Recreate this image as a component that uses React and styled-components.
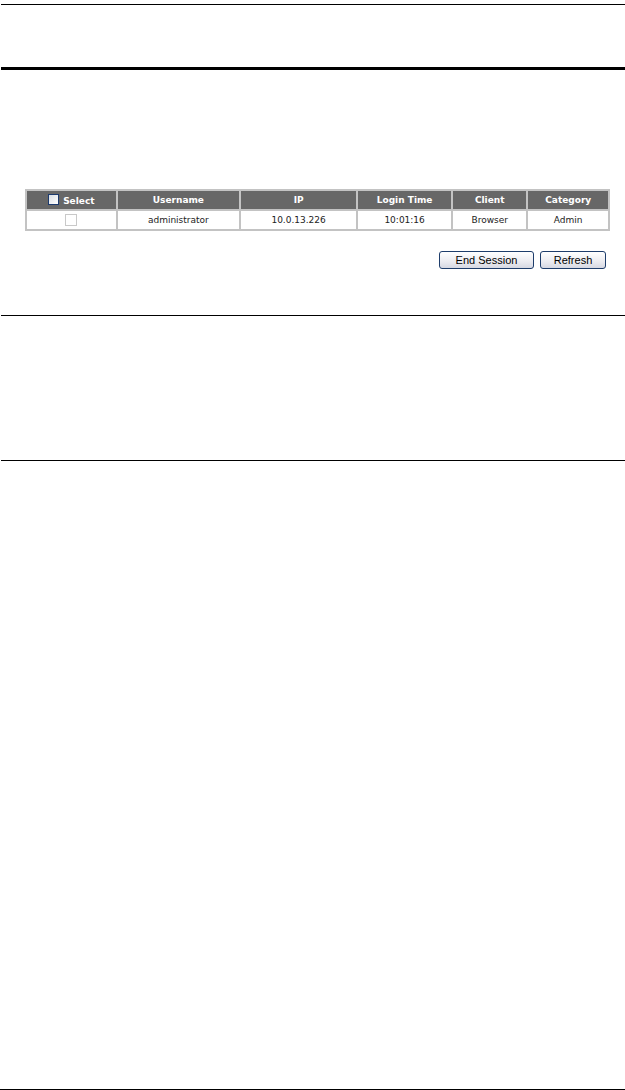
import React from "react";
import styled, { createGlobalStyle } from "styled-components";

const Global = createGlobalStyle`
  html, body { margin: 0; padding: 0; background: #fff; }
  body { width: 625px; height: 1090px; overflow: hidden; font-family: "DejaVu Sans", Verdana, sans-serif; }
`;

const Page = styled.div`
  width: 625px;
  height: 1090px;
  display: flex;
  flex-direction: column;
`;

const Rule = styled.div`
  margin-left: ${p => p.$left ?? 1}px;
  height: ${p => p.$h}px;
  background: #000;
  flex: none;
`;

const Spacer = styled.div`
  height: ${p => p.$h}px;
  flex: none;
`;

const Table = styled.table`
  margin-left: 25px;
  width: 585px;
  border-collapse: collapse;
  font-family: "DejaVu Sans", Verdana, sans-serif;
  font-size: 9px;
  table-layout: fixed;
`;

const Th = styled.th`
  background: #676767;
  color: #fff;
  font-weight: bold;
  height: 18px;
  padding: 0;
  border: 2px solid #c3c3c3;
  text-align: center;
  vertical-align: middle;
  white-space: nowrap;
`;

const Col = styled.col`
  width: ${p => p.$w}px;
`;

const Td = styled.td`
  height: 18px;
  padding: 0;
  border: 2px solid #c3c3c3;
  text-align: center;
  vertical-align: middle;
  color: #222;
`;

const HeadCheck = styled.span`
  display: inline-block;
  width: 9px;
  height: 9px;
  border: 1px solid #1c3a6e;
  background: linear-gradient(135deg, #d8dde4, #fff);
  vertical-align: -1px;
  margin-right: 4px;
`;

const RowCheck = styled.span`
  display: inline-block;
  width: 10px;
  height: 10px;
  border: 1px solid #c9c9c9;
  background: #fff;
  vertical-align: middle;
`;

const ButtonRow = styled.div`
  display: flex;
  justify-content: flex-end;
  gap: 6px;
  padding-right: 19px;
  margin-top: 20px;
`;

const Button = styled.button`
  width: ${p => p.$w}px;
  height: 18px;
  padding: 0;
  border: 1px solid #1e3d6b;
  border-radius: 3px;
  background: linear-gradient(#ffffff, #ebebf0 60%, #d6d8e2);
  font-family: "Liberation Sans", Arial, sans-serif;
  font-size: 11px;
  color: #000;
`;

const cols = [
  ["Select", 89],
  ["Username", 121],
  ["IP", 115],
  ["Login Time", 93],
  ["Client", 74],
  ["Category", 80],
];

export default function App() {
  return (
    <Page>
      <Global />
      <Spacer $h={4} />
      <Rule $h={1} />
      <Spacer $h={62} />
      <Rule $h={3} />
      <Spacer $h={119} />
      <Table>
        <colgroup>
          {cols.map(([name, w]) => (
            <Col key={name} $w={w} />
          ))}
        </colgroup>
        <thead>
          <tr>
            {cols.map(([name]) => (
              <Th key={name}>
                {name === "Select" && <HeadCheck />}
                {name}
              </Th>
            ))}
          </tr>
        </thead>
        <tbody>
          <tr>
            <Td><RowCheck /></Td>
            <Td>administrator</Td>
            <Td>10.0.13.226</Td>
            <Td>10:01:16</Td>
            <Td>Browser</Td>
            <Td>Admin</Td>
          </tr>
        </tbody>
      </Table>
      <ButtonRow>
        <Button $w={95}>End Session</Button>
        <Button $w={66}>Refresh</Button>
      </ButtonRow>
      <Spacer $h={46} />
      <Rule $h={1} />
      <Spacer $h={144} />
      <Rule $h={1} />
      <Spacer $h={628} />
      <Rule $h={1} $left={0} />
    </Page>
  );
}
